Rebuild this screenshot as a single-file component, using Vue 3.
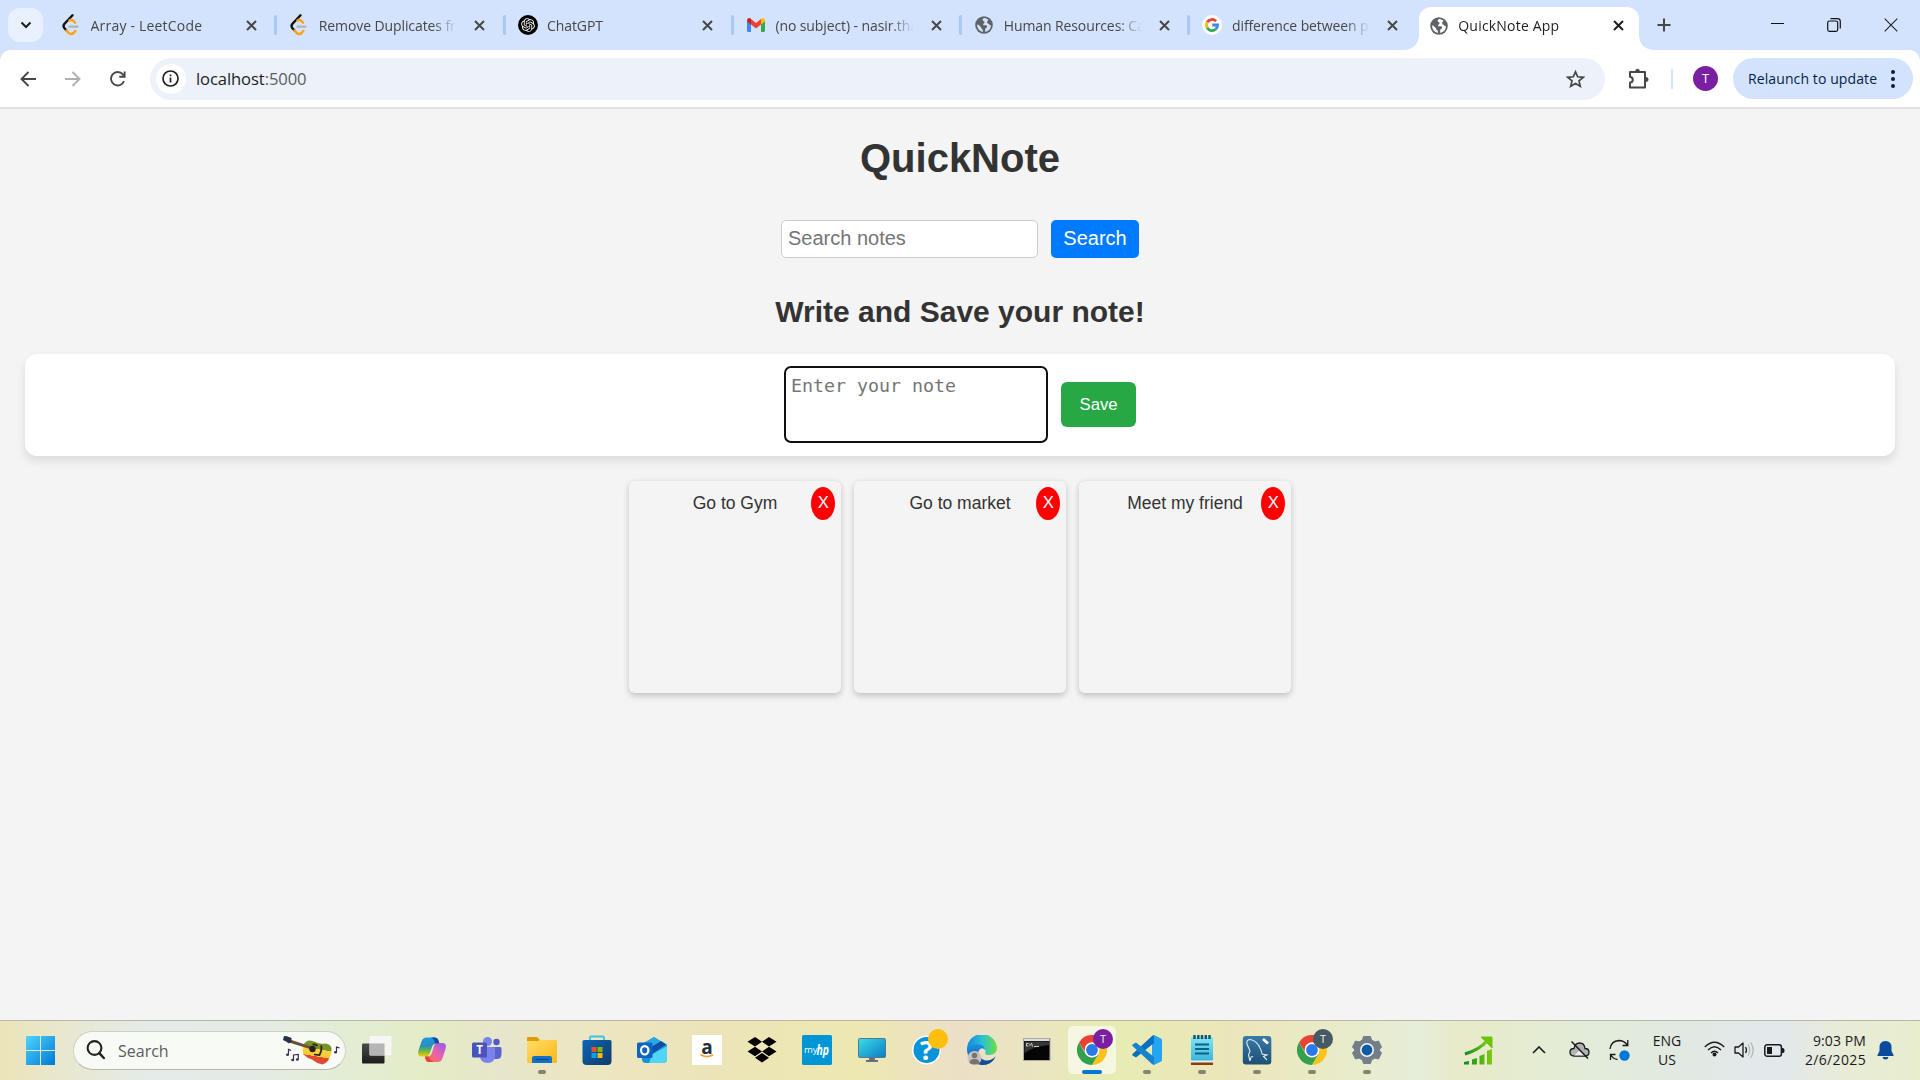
<script setup>
const tabs = [
  { icon: 'leetcode', title: 'Array - LeetCode', wide: true },
  { icon: 'leetcode', title: 'Remove Duplicates from' },
  { icon: 'chatgpt', title: 'ChatGPT' },
  { icon: 'gmail', title: '(no subject) - nasir.tha' },
  { icon: 'globe', title: 'Human Resources: Ca' },
  { icon: 'google', title: 'difference between pu' },
]
const notes = ['Go to Gym', 'Go to market', 'Meet my friend']
</script>

<template>
  <div class="screen">
    <svg class="defs" width="0" height="0" aria-hidden="true">
      <defs>
        <linearGradient id="winG" x1="0" y1="0" x2="1" y2="1"><stop offset="0" stop-color="#4fd4ff" /><stop offset="1" stop-color="#0078d4" /></linearGradient>
        <linearGradient id="tvG" x1="0" y1="0" x2="0" y2="1"><stop offset="0" stop-color="#4a4a4a" /><stop offset="1" stop-color="#1c1c1c" /></linearGradient>
        <linearGradient id="cpA" x1="0" y1="0" x2="0" y2="1"><stop offset="0" stop-color="#1b9bea" /><stop offset=".45" stop-color="#2c8fb8" /><stop offset=".7" stop-color="#66b84a" /><stop offset="1" stop-color="#ffc800" /></linearGradient>
        <linearGradient id="cpB" x1="1" y1="0" x2="0" y2="1"><stop offset="0" stop-color="#8d5cf0" /><stop offset=".45" stop-color="#e55fb5" /><stop offset="1" stop-color="#ff7a3c" /></linearGradient>
        <linearGradient id="foG" x1="0" y1="0" x2="1" y2="1"><stop offset="0" stop-color="#ffdc6b" /><stop offset="1" stop-color="#fdb813" /></linearGradient>
        <linearGradient id="stG" x1="0" y1="0" x2="1" y2="1"><stop offset="0" stop-color="#0b66b8" /><stop offset="1" stop-color="#123a66" /></linearGradient>
        <linearGradient id="moG" x1="0" y1="0" x2="1" y2="1"><stop offset="0" stop-color="#3bdcea" /><stop offset="1" stop-color="#0a7cc4" /></linearGradient>
        <linearGradient id="edA" x1="0" y1="0" x2="1" y2="0"><stop offset="0" stop-color="#1787d8" /><stop offset=".5" stop-color="#2bc0d8" /><stop offset="1" stop-color="#6be03e" /></linearGradient>
        <linearGradient id="edB" x1="0" y1="0" x2="0" y2="1"><stop offset="0" stop-color="#1b93e4" /><stop offset="1" stop-color="#0c4fa0" /></linearGradient>
        <linearGradient id="npG" x1="0" y1="0" x2="0" y2="1"><stop offset="0" stop-color="#83e3f6" /><stop offset="1" stop-color="#3ab8da" /></linearGradient>
        <linearGradient id="myG" x1="0" y1="0" x2="0" y2="1"><stop offset="0" stop-color="#3b7ba6" /><stop offset="1" stop-color="#1d4f72" /></linearGradient>
        <linearGradient id="grG" x1="0" y1="0" x2="1" y2="0"><stop offset="0" stop-color="#0d8a1c" /><stop offset="1" stop-color="#7ecb10" /></linearGradient>
        <linearGradient id="guG" x1=".3" y1="0" x2=".1" y2="1"><stop offset=".3" stop-color="#79912c" /><stop offset=".31" stop-color="#f7d33c" /><stop offset=".6" stop-color="#f7c934" /><stop offset=".61" stop-color="#df4a32" /></linearGradient>
        <symbol id="chrome" viewBox="0 0 30 30">
          <path d="M15 7.500H28A15 15 0 0 1 15 30L21.500 18.700Z" fill="#fcc31e" />
          <path d="M2 7.500A15 15 0 0 1 28 7.500H15A7.500 7.500 0 0 0 8.400 11.500L8 17Z" fill="#ea4335" />
          <path d="M2 7.500L8.500 18.800L15 22.500L21.500 18.700L15 30A15 15 0 0 1 2 7.500Z" fill="#34a04e" />
          <circle cx="15" cy="15" r="7.400" fill="#fff" /><circle cx="15" cy="15" r="5.900" fill="#2a78ea" />
        </symbol>
        <symbol id="globe" viewBox="0 0 18 18">
          <circle cx="9" cy="9" r="8.800" fill="#5f6368" />
          <path d="M9.200 2Q6.800 3.200 8 4.800Q10 5.300 9.500 6.800Q7.500 8 8.300 9.200H11Q12.800 9.800 12 11.500Q10.500 11.800 10.200 13V15.900Q15.500 14.800 16 9.200Q14.500 9.400 14 8Q11.800 7.600 12 5.800L13.500 3.800Q11.500 2 9.200 2ZM2 8.500Q2.200 14.500 7.800 16V13.500Q6 13.300 6.200 11.500L3.500 8.800Z" fill="var(--land)" />
        </symbol>
      </defs>
    </svg>

    <!-- tab strip -->
    <header class="strip">
      <button class="tabsearch"><svg width="12" height="8" viewBox="0 0 12 8"><path d="M1.500 1.500L6 6L10.500 1.500" fill="none" stroke="#1f1f1f" stroke-width="2" /></svg></button>
      <div v-for="(t, i) in tabs" :key="i" class="tab" :class="{ wide: t.wide, last: i === tabs.length - 1 }">
        <span class="fav">
          <svg v-if="t.icon === 'leetcode'" width="18" height="22" viewBox="0 0 18 22"><path d="M10.500 1.300L2.300 10Q.8 12 2.300 14L4.500 16.500" fill="none" stroke="#111" stroke-width="2.400" stroke-linecap="round" /><path d="M7.500 6.500Q9.500 4.800 11.500 7L13 8.700M4.500 16.500L7 19.300Q9.300 21 11.500 19L13.300 17" fill="none" stroke="#ffa116" stroke-width="2.400" stroke-linecap="round" /><path d="M7.500 12.700H15.500" stroke="#b3b3b3" stroke-width="2.300" stroke-linecap="round" /></svg>
          <svg v-else-if="t.icon === 'chatgpt'" class="gpt" width="20" height="20" viewBox="-5.500 -5.500 35 35"><circle cx="12" cy="12" r="17.500" fill="#000" /><path fill="#fff" d="M22.2819 9.8211a5.9847 5.9847 0 0 0-.5157-4.9108 6.0462 6.0462 0 0 0-6.5098-2.9A6.0651 6.0651 0 0 0 4.9807 4.1818a5.9847 5.9847 0 0 0-3.9977 2.9 6.0462 6.0462 0 0 0 .7427 7.0966 5.98 5.98 0 0 0 .511 4.9107 6.051 6.051 0 0 0 6.5146 2.9001A5.9847 5.9847 0 0 0 13.2599 24a6.0557 6.0557 0 0 0 5.7718-4.2058 5.9894 5.9894 0 0 0 3.9977-2.9001 6.0557 6.0557 0 0 0-.7475-7.0729zm-9.022 12.6081a4.4755 4.4755 0 0 1-2.8764-1.0408l.1419-.0804 4.7783-2.7582a.7948.7948 0 0 0 .3927-.6813v-6.7369l2.02 1.1686a.071.071 0 0 1 .038.052v5.5826a4.504 4.504 0 0 1-4.4945 4.4944zm-9.6607-4.1254a4.4708 4.4708 0 0 1-.5346-3.0137l.142.0852 4.783 2.7582a.7712.7712 0 0 0 .7806 0l5.8428-3.3685v2.3324a.0804.0804 0 0 1-.0332.0615L9.74 19.9502a4.4992 4.4992 0 0 1-6.1408-1.6464zM2.3408 7.8956a4.485 4.485 0 0 1 2.3655-1.9728V11.6a.7664.7664 0 0 0 .3879.6765l5.8144 3.3543-2.0201 1.1685a.0757.0757 0 0 1-.071 0l-4.8303-2.7865A4.504 4.504 0 0 1 2.3408 7.872zm16.5963 3.8558L13.1038 8.364 15.1192 7.2a.0757.0757 0 0 1 .071 0l4.8303 2.7913a4.4944 4.4944 0 0 1-.6765 8.1042v-5.6772a.79.79 0 0 0-.407-.667zm2.0107-3.0231l-.142-.0852-4.7735-2.7818a.7759.7759 0 0 0-.7854 0L9.409 9.2297V6.8974a.0662.0662 0 0 1 .0284-.0615l4.8303-2.7866a4.4992 4.4992 0 0 1 6.6802 4.66zM8.3065 12.863l-2.02-1.1638a.0804.0804 0 0 1-.038-.0567V6.0742a4.4992 4.4992 0 0 1 7.3757-3.4537l-.142.0805L8.704 5.459a.7948.7948 0 0 0-.3927.6813zm1.0976-2.3654l2.602-1.4998 2.6069 1.4998v2.9994l-2.5974 1.4997-2.6067-1.4997Z" /></svg>
          <svg v-else-if="t.icon === 'gmail'" width="18" height="14" viewBox="0 0 18 14"><path d="M0 2V12.500Q0 14 1.500 14H4V6Z" fill="#4285f4" /><path d="M18 2V12.500Q18 14 16.500 14H14V6Z" fill="#34a853" /><path d="M4 1L9 5L14 1V6.500L9 10.500L4 6.500Z" fill="#ea4335" /><path d="M0 2.500Q0 0 2.200 0Q3 0 4 1V6.500L0 3.500Z" fill="#c5221f" /><path d="M18 2.500Q18 0 15.800 0Q15 0 14 1V6.500L18 3.500Z" fill="#fbbc04" /></svg>
          <svg v-else-if="t.icon === 'globe'" width="18" height="18"><use href="#globe" /></svg>
          <svg v-else width="20" height="20" viewBox="0 0 20 20"><circle cx="10" cy="10" r="10" fill="#fff" /><g fill="none" stroke-width="2.800"><path d="M5.200 7.300A5.500 5.500 0 0 1 14 6.200" stroke="#ea4335" /><path d="M5.200 12.700A5.500 5.500 0 0 1 5.200 7.300" stroke="#fbbc05" /><path d="M5.200 12.700A5.500 5.500 0 0 0 13.700 14.200" stroke="#34a853" /><path d="M10.200 10H15.600Q15.500 12.700 13.700 14.200" stroke="#4285f4" /></g></svg>
        </span>
        <span class="title">{{ t.title }}</span>
        <svg class="x" width="11" height="11" viewBox="0 0 11 11"><path d="M1 1L10 10M10 1L1 10" stroke="#474747" stroke-width="2" /></svg>
      </div>
      <div class="tab wide active">
        <span class="fav"><svg width="18" height="18"><use href="#globe" /></svg></span>
        <span class="title">QuickNote App</span>
        <svg class="x" width="11" height="11" viewBox="0 0 11 11"><path d="M1 1L10 10M10 1L1 10" stroke="#1f1f1f" stroke-width="2" /></svg>
      </div>
      <svg class="plus" width="14" height="14" viewBox="0 0 14 14"><path d="M7 .5V13.500M.5 7H13.500" stroke="#474747" stroke-width="2" /></svg>
      <div class="winbtns">
        <svg width="14" height="14" viewBox="0 0 14 14"><path d="M1 5.500H14" stroke="#111" /></svg>
        <svg width="14" height="14" viewBox="0 0 14 14"><rect x=".7" y="3" width="10" height="10.300" rx="1.800" fill="none" stroke="#111" stroke-width="1.200" /><path d="M3.500 .7H10.500Q13.300 .7 13.300 3.500V10.500" fill="none" stroke="#111" stroke-width="1.200" /></svg>
        <svg width="14" height="14" viewBox="0 0 14 14"><path d="M.7 .7L13.300 13.300M13.300 .7L.7 13.300" stroke="#222" stroke-width="1.100" /></svg>
      </div>
    </header>

    <!-- toolbar -->
    <div class="toolwrap">
      <div class="toolbar">
        <div class="nav">
          <svg width="16" height="16" viewBox="0 0 16 16"><path d="M8.500 1L1.500 8L8.500 15M1.500 8H16" fill="none" stroke="#474747" stroke-width="1.900" /></svg>
          <svg width="16" height="16" viewBox="0 0 16 16"><path d="M7.500 1L14.500 8L7.500 15M14.500 8H0" fill="none" stroke="#b0b0b0" stroke-width="1.900" /></svg>
          <svg width="16" height="16" viewBox="0 0 16 16"><path d="M14 10.200A6.700 6.700 0 1 1 12.800 3.300L14 4.800" fill="none" stroke="#474747" stroke-width="1.900" /><path d="M14.600 .5V5.800H9.300" fill="none" stroke="#474747" stroke-width="1.900" /></svg>
        </div>
        <div class="omni">
          <span class="info"><svg width="17" height="17" viewBox="0 0 17 17"><circle cx="8.500" cy="8.500" r="7.500" fill="none" stroke="#1f1f1f" stroke-width="1.700" /><path d="M8.500 7.500V12.500M8.500 4.500V6.200" stroke="#1f1f1f" stroke-width="1.700" /></svg></span>
          <span class="url">localhost<i>:5000</i></span>
          <svg class="star" width="19" height="18" viewBox="0 0 19 18"><path d="M9.500 1.800L11.700 6.800L17.200 7.300L13 10.900L14.300 16.300L9.500 13.400L4.700 16.300L6 10.900L1.800 7.300L7.300 6.800Z" fill="none" stroke="#474747" stroke-width="1.700" /></svg>
        </div>
        <svg class="puzzle" width="21" height="21" viewBox="0 0 21 21"><path d="M2 4H17V19.500H2V14.800Q4.800 14.300 4.800 11.800T2 8.800Z" fill="none" stroke="#474747" stroke-width="2" stroke-linejoin="round" /><path d="M7 3.500Q7.300 .8 9.500 .8T12 3.500ZM17.500 9V14.200Q20.500 13.800 20.500 11.600T17.500 9Z" fill="#474747" /></svg>
        <span class="vsep"></span>
        <span class="avatar">T</span>
        <div class="relaunch"><span>Relaunch to update</span><b class="dots"><i></i><i></i><i></i></b></div>
      </div>
    </div>

    <!-- page -->
    <main class="page">
      <h1>QuickNote</h1>
      <form class="search" @submit.prevent>
        <input type="text" placeholder="Search notes" />
        <button>Search</button>
      </form>
      <h2>Write and Save your note!</h2>
      <form class="compose" @submit.prevent>
        <textarea placeholder="Enter your note"></textarea>
        <button>Save</button>
      </form>
      <section class="notes">
        <article v-for="n in notes" :key="n" class="note">
          <p>{{ n }}</p>
          <button class="del">X</button>
        </article>
      </section>
    </main>

    <!-- taskbar -->
    <footer class="taskbar">
      <svg class="start" width="29" height="29" viewBox="0 0 29 29"><path d="M0 0H14V14H0ZM15 0H29V14H15ZM0 15H14V29H0ZM15 15H29V29H15Z" fill="url(#winG)" /></svg>
      <div class="tsearch">
        <svg width="20" height="20" viewBox="0 0 20 20"><circle cx="8.500" cy="8" r="6.900" fill="none" stroke="#222" stroke-width="2.100" /><path d="M13.300 13.200L17.800 18" stroke="#222" stroke-width="2.500" stroke-linecap="round" /></svg>
        <span>Search</span>
        <svg class="guitar" width="58" height="30" viewBox="0 0 58 30">
          <path d="M21 9Q24 3.500 31 6.500Q37 9.500 42 8.500Q50 9 48.500 17Q46 28 39.500 29.500Q33 28 29 24.500Q24 23 20.500 19.500Q18.500 14 21 9Z" fill="url(#guG)" />
          <path d="M7 4.500L31 12.500L30 15L6 7.500Z" fill="#68503c" /><path d="M1 1L4 1.200L8.500 3L8.500 6.500L6 8.500L3 6.500L0 5Z" fill="#263345" />
          <circle cx="29.500" cy="14" r="3.200" fill="#2c1c20" /><path d="M29.500 9.500Q33 9 34.500 11M38 10.500Q39.500 14 36.500 20L31 19.500" fill="none" stroke="#2a2022" stroke-width="1.700" />
          <path d="M5.500 19.500V14.500L8 15.500M10.500 24.500V20L15.300 19.500V24M53.500 17V12L56.500 12.800" fill="none" stroke="#3d2e57" stroke-width="1.200" /><ellipse cx="4.500" cy="19.700" rx="1.500" ry="1.200" fill="#3d2e57" /><ellipse cx="9.700" cy="25" rx="1.500" ry="1.200" fill="#3d2e57" /><ellipse cx="14.300" cy="24.500" rx="1.500" ry="1.200" fill="#3d2e57" /><ellipse cx="52.500" cy="17.300" rx="1.500" ry="1.200" fill="#3d2e57" />
        </svg>
      </div>
      <div class="apps">
        <div class="app"><svg viewBox="0 0 30 30"><rect y="8.500" width="22.500" height="20" rx="1" fill="url(#tvG)" /><rect x="7.500" y="1" width="22" height="19.500" rx="1" fill="#f7f7f7" opacity=".92" /><path d="M7.500 8.500H22.500V20.500H8.500Q7.500 20.500 7.500 19.500Z" fill="#b5b5b5" /></svg></div>
        <div class="app"><svg viewBox="0 0 30 30"><path d="M9.500 2.500H18Q20.500 2.500 21.300 5L22.500 9H18.500Q15.800 9 15 12L12.800 18.500Q11.800 21.500 8.500 21.500H5Q0 21.500 1.300 16L4.300 7Q5.500 2.500 9.500 2.500Z" fill="url(#cpA)" /><path d="M20.500 27H12Q9.500 27 8.700 24.500L7.800 21.500H10.500Q14 21.500 15 17.500L17 11Q18 8 21.500 8H25Q30 8 28.700 13.500L25.700 22.500Q24.500 27 20.500 27Z" fill="url(#cpB)" /><path d="M14 2.500H18Q20.500 2.500 21.300 5L22.300 8.200H18Q17.200 4 14 2.500Z" fill="#174aa5" /><path d="M16.500 27H12Q9.500 27 8.700 24.500L7.900 21.500H11.500Q13 25.500 16.500 27Z" fill="#e8432e" /></svg></div>
        <div class="app"><svg viewBox="0 0 30 30"><circle cx="24.500" cy="7" r="3.200" fill="#5059c9" /><path d="M19 12H28Q29.500 12 29.500 13.500V19Q29.500 24 25 24H21Z" fill="#5b62cf" /><circle cx="15.500" cy="6.500" r="4.500" fill="#7b83eb" /><path d="M8 12H22Q23 12 23 13.500V20Q23 28 15.500 28T8 20Z" fill="#7b83eb" /><rect y="7.500" width="15" height="15" rx="1.500" fill="#4b53bc" /><text x="7.500" y="19" text-anchor="middle" font-size="11.500" font-weight="700" fill="#fff">T</text></svg></div>
        <div class="app"><svg viewBox="0 0 30 30"><path d="M0 3Q0 2 1 2H10L13 5V10H0Z" fill="#e09b05" /><path d="M0 6H11L13 5H29Q30 5 30 6V27Q30 28 29 28H1Q0 28 0 27Z" fill="url(#foG)" /><path d="M5 28V23Q5 21 7 21H23Q25 21 25 23V28Z" fill="#1272c4" /><path d="M8.500 24.500H21.500" stroke="#07448a" stroke-width="1.300" /></svg><i class="run"></i></div>
        <div class="app"><svg viewBox="0 0 30 30"><path d="M8 6V2.500Q8 1.500 9 1.500H21Q22 1.500 22 2.500V6" fill="none" stroke="#35c5f0" stroke-width="1.800" /><path d="M.5 6.500Q.5 5 2 5H28Q29.500 5 29.500 6.500V26Q29.500 30 25.500 30H4.500Q.5 30 .5 26Z" fill="url(#stG)" /><path d="M9.500 12H14.500V17H9.500Z" fill="#f25022" /><path d="M15.500 12H20.500V17H15.500Z" fill="#7fba00" /><path d="M9.500 18H14.500V23H9.500Z" fill="#00a4ef" /><path d="M15.500 18H20.500V23H15.500Z" fill="#ffb900" /></svg></div>
        <div class="app"><svg viewBox="0 0 30 30"><path d="M5 9L17 2L30 10V24Q30 28 26 28H9Q5 28 5 24Z" fill="#1490df" /><path d="M17 2L30 10L14 20L8 8Z" fill="#28a8ea" /><path d="M24 6L29.500 9.500L15 19L12 13.500Z" fill="#0f4fa8" /><path d="M30 11V24Q30 28 26 28H12L15 19.500Z" fill="#50d5f6" /><rect y="7.500" width="15.500" height="15.500" rx="1.500" fill="#0f65bd" /><ellipse cx="7.700" cy="15.300" rx="3.700" ry="4.200" fill="none" stroke="#fff" stroke-width="2.200" /></svg></div>
        <div class="app"><svg viewBox="0 0 30 30"><rect width="30" height="30" fill="#fff" /><text x="15" y="19" text-anchor="middle" font-size="19" font-weight="700" fill="#232f3e">a</text><path d="M8.500 19.500Q15 23.500 21 19.800" fill="none" stroke="#f5a13c" stroke-width="1.600" /></svg></div>
        <div class="app"><svg viewBox="0 0 30 30"><path d="M8 2L15 6.700L8 11.400L.5 6.700ZM22 2L29.500 6.700L22 11.400L15 6.700ZM8 11.800L15 16.500L8 21.200L.5 16.500ZM22 11.800L29.500 16.500L22 21.200L15 16.500ZM15 18L22 22.700L15 27.400L8 22.700Z" fill="#000" /></svg></div>
        <div class="app"><svg viewBox="0 0 30 30"><rect width="30" height="30" rx="1.500" fill="#0096d6" /><text x="2" y="18" font-size="9.500" fill="#fff">my</text><text x="14.500" y="19.500" font-size="13.500" font-weight="700" font-style="italic" fill="#fff" textLength="12.500" lengthAdjust="spacingAndGlyphs">hp</text></svg></div>
        <div class="app"><svg viewBox="0 0 30 30"><path d="M12 22H18V25H21V27H9V25H12Z" fill="#65717b" /><rect x="1.500" y="3.500" width="27" height="19" rx="1" fill="url(#moG)" stroke="#557a8d" /></svg></div>
        <div class="app"><svg viewBox="0 0 30 30"><circle cx="14.500" cy="15" r="14.500" fill="#fff" /><circle cx="14.500" cy="15" r="13" fill="#0a93d8" /><text x="14.500" y="24.500" text-anchor="middle" font-size="27" font-weight="700" fill="#fff">?</text></svg><i class="badge yellow"></i></div>
        <div class="app"><svg viewBox="0 0 30 30"><path d="M0 15A15 15 0 0 1 30 13Q30 20 22 20Q17 20 18.500 17Q19 12 13 11Q6 10 0 15Z" fill="url(#edA)" /><path d="M0 15Q2 9 10 9Q17 9 18.500 15Q14 11 11.500 16Q10 22 17 25Q24 27 28.500 22Q24 30 15 30Q1 29 0 15Z" fill="url(#edB)" /><path d="M11.500 16Q8 21 14 25Q22 28 28.500 21.500Q25 30 15 30Q8 27 9 20Z" fill="#144f94" /><circle cx="7.500" cy="23" r="7" fill="#c9c5be" /><circle cx="7.500" cy="20.500" r="2.800" fill="#77736d" /><path d="M2.500 28Q2.500 24 7.500 24T12.500 28Q7.500 31 2.500 28Z" fill="#77736d" /></svg></div>
        <div class="app"><svg viewBox="0 0 30 30"><rect x="1.500" y="3.500" width="26.500" height="22" fill="#050505" stroke="#a9a9a9" /><path d="M2 4H27.500V6H2Z" fill="#ddd" /><path d="M2.500 6.500H27V10Q12 11 2.500 18Z" fill="#373737" /><path d="M6.500 8.500H4.500V11H6.500M8 8.500V11M9.500 8L10.500 11.500M12 11.500H17" fill="none" stroke="#ddd" stroke-width=".9" /></svg></div>
        <div class="app on"><svg><use href="#chrome" /></svg><i class="badge purple">T</i><i class="run big"></i></div>
        <div class="app"><svg viewBox="0 0 30 30"><path d="M22 0L29 3.500Q30 4 30 5V25Q30 26 29 26.500L22 30L20 27V3Z" fill="#26a4f2" /><path d="M22 0V8L4 22.500L.5 20.500Q0 19.500 .5 19L20 1Z" fill="#0a6fbd" /><path d="M22 30V22L4 7.500L.5 9.500Q0 10.500 .5 11L20 29Z" fill="#1484d1" /></svg><i class="run"></i></div>
        <div class="app"><svg viewBox="0 0 30 30"><rect x="4" y="26" width="22" height="4" fill="#8d3b10" /><rect x="4" y="24" width="22" height="3.500" fill="#eee" /><rect x="4" y="2" width="22" height="23.500" rx="1" fill="url(#npG)" /><path d="M8 9.500H22M8 14H22M8 18.500H22" stroke="#086384" stroke-width="2" /><path d="M7.500 0V4M11.300 0V4M15 0V4M18.800 0V4M22.500 0V4" stroke="#14536b" stroke-width="2.400" /></svg><i class="run"></i></div>
        <div class="app"><svg viewBox="0 0 30 30"><rect x=".8" y="1" width="28.500" height="28.500" rx="3" fill="url(#myG)" /><path d="M8 26L6.500 20L8 16L5 9Q4 4.500 8.500 4.500Q15 6 18 13Q20 17 20 19L25 20L21.500 21.500L25 25M8 26Q9 20 11 22" fill="none" stroke="#dfeaf2" stroke-width="1.100" /><path d="M21 4L26 8.500" stroke="#fff" stroke-width="2.800" /></svg><i class="run"></i></div>
        <div class="app"><svg><use href="#chrome" /></svg><i class="badge slate">T</i><i class="run"></i></div>
        <div class="app"><svg viewBox="0 0 30 30"><path d="M11.500 1.500H18.500L19.500 5L23 7L26.500 6L29.500 12L27 15L29.500 18L26.500 24L23 23L19.500 25L18.500 28.500H11.500L10.500 25L7 23L3.500 24L.5 18L3 15L.5 12L3.500 6L7 7L10.500 5Z" fill="#747e88" stroke="#747e88" stroke-linejoin="round" /><circle cx="15" cy="15" r="7" fill="#f4f4f4" /><circle cx="15" cy="15" r="5.400" fill="#0d5aa7" /></svg><i class="run"></i></div>
      </div>
      <div class="tray">
        <svg class="graph" width="29" height="29" viewBox="0 0 29 29"><path d="M1 18Q15 14 23 5" fill="none" stroke="url(#grG)" stroke-width="3.200" /><path d="M17 1H28V12Z" fill="#6cc40d" stroke="#6cc40d" /><path d="M0 26L5 25V28.500H0ZM8 23.500L13 22V28.500H8ZM15.500 20L20.500 18V28.500H15.500ZM23 15L28 13V28.500H23Z" fill="url(#grG)" /></svg>
        <svg class="chev" width="14" height="8" viewBox="0 0 14 8"><path d="M1 7L7 1L13 7" fill="none" stroke="#1a1a1a" stroke-width="1.600" /></svg>
        <svg class="cloud" width="21" height="18" viewBox="0 0 21 18"><path d="M5 15Q1 15 1 11.200Q1 7.500 5 7.500Q6 2 10.500 2Q15.500 2 16 7.500Q20 7.500 20 11.200Q20 15 16 15Z" fill="#b2b2b5" stroke="#1a1a1a" stroke-width="1.300" /><path d="M5 14.500L11 9L16 14.500Z" fill="#ececf0" /><path d="M2.500 .5L19 17.500" stroke="#1a1a1a" stroke-width="1.500" /></svg>
        <svg class="sync" width="21" height="22" viewBox="0 0 21 22"><path d="M1 10Q2 2 10 1.500Q15 1.500 18.500 6M18.800 1V6.500H13.500M1.500 21V15.500H6.500M1.500 15.500Q4 20 8.500 20.500" fill="none" stroke="#1a1a1a" stroke-width="1.300" /><circle cx="15.500" cy="16.500" r="5.200" fill="#0078d7" /></svg>
        <div class="lang">ENG<br />US</div>
        <svg class="wifi" width="21" height="16" viewBox="0 0 21 16"><path d="M.8 6Q10.500 -3.500 20.200 6M4 9Q10.500 2.500 17 9M7 12Q10.500 8.500 14 12" fill="none" stroke="#1a1a1a" stroke-width="1.400" /><circle cx="10.500" cy="13.600" r="2" fill="#1a1a1a" /></svg>
        <svg class="vol" width="21" height="18" viewBox="0 0 21 18"><path d="M1 6H4.500L9 2V16L4.500 12H1Z" fill="none" stroke="#1a1a1a" stroke-width="1.300" stroke-linejoin="round" /><path d="M11.500 6Q13.500 9 11.500 12" fill="none" stroke="#1a1a1a" stroke-width="1.300" /><path d="M14 3.500Q17.500 9 14 14.500M16.800 1.500Q21.500 9 16.800 16.500" fill="none" stroke="#b3b7b5" stroke-width="1.300" /></svg>
        <svg class="batt" width="21" height="13" viewBox="0 0 21 13"><rect x=".8" y=".8" width="16.600" height="11.400" rx="2.300" fill="none" stroke="#1a1a1a" stroke-width="1.500" /><rect x="3" y="3" width="5" height="7" fill="#1a1a1a" /><path d="M18 4H19Q20.500 4 20.500 6.500T19 9H18Z" fill="#1a1a1a" /></svg>
        <div class="clock">9:03 PM<br /><span>2/6/2025</span></div>
        <svg class="bell" width="17" height="20" viewBox="0 0 17 20"><path d="M2.500 7.500Q2.500 1 8.500 1T14.500 7.500V11L16.500 15V16H.5V15L2.500 11ZM5.500 17H11.500Q11 19.500 8.500 19.500T5.500 17Z" fill="#0a4a9c" /></svg>
      </div>
    </footer>
  </div>
</template>

<style>
html, body { margin: 0; overflow: hidden; }
</style>

<style scoped>
* { box-sizing: border-box; }
.screen { width: 1920px; height: 1080px; display: flex; flex-direction: column; background: #f4f4f4; font-family: "Open Sans", "Noto Sans", sans-serif; overflow: hidden; }
.defs { position: absolute; }
button { border: 0; padding: 0; }
svg { display: block; flex: none; }
i { font-style: normal; }

.strip { height: 50px; flex: none; display: flex; background: #d3e3fd; padding-left: 8px; }
.tabsearch { width: 35px; height: 34px; margin: 8px 4px 0 0; border-radius: 12px; background: #e9f0fe; display: flex; align-items: center; justify-content: center; }
.tab { --land: #d3e3fd; position: relative; width: 228.300px; height: 50px; padding: 0 18.500px 0 15px; display: flex; align-items: center; flex: none; }
.tab:not(.active):not(.last)::after { content: ""; position: absolute; right: -2px; top: 15px; width: 3px; height: 20px; border-radius: 2px; background: #a8c7fa; }
.fav { width: 18px; margin-right: 10.500px; display: flex; justify-content: center; }
.title { flex: 1; min-width: 0; margin-right: 17px; white-space: nowrap; overflow: hidden; font-size: 14px; line-height: 22px; letter-spacing: -.1px; color: #474747; padding-top: 1px; -webkit-mask-image: linear-gradient(90deg, #000 calc(100% - 25px), transparent); mask-image: linear-gradient(90deg, #000 calc(100% - 25px), transparent); }
.wide .title { letter-spacing: .2px; }
.active { --land: #fff; width: 220px; height: 43px; margin: 7px 0 0 2px; padding: 0 15px 6px 11px; background: #fff; border-radius: 12px 12px 0 0; }
.active .title { color: #1f1f1f; }
.active::before, .active::after { content: ""; position: absolute; bottom: 0; width: 14px; height: 14px; }
.active::before { left: -14px; background: radial-gradient(circle at 0 0, transparent 13.500px, #fff 14px); }
.active::after { right: -14px; background: radial-gradient(circle at 100% 0, transparent 13.500px, #fff 14px); }
.plus { margin: 18px 0 0 18px; }
.winbtns { margin: 18px 22px 0 auto; display: flex; gap: 43px; }

.toolwrap { height: 59px; flex: none; background: #d3e3fd; }
.toolbar { height: 59px; background: #fff; border-radius: 11px 11px 0 0; border-bottom: 2px solid #e1e1e1; display: flex; align-items: center; padding: 0 7px 0 20px; }
.nav { display: flex; gap: 29px; width: 130px; margin-left: -.5px; }
.omni { width: 1455px; height: 42px; border-radius: 21px; background: #edf1fa; display: flex; align-items: center; padding: 0 20px 0 6px; }
.info { width: 30px; height: 30px; border-radius: 50%; background: #fff; display: flex; align-items: center; justify-content: center; margin-right: 10.500px; }
.url { font-size: 16.600px; line-height: 24px; letter-spacing: -.1px; color: #1f1f1f; padding-top: 1px; }
.url i { color: #5a5e62; }
.star { margin-left: auto; }
.puzzle { margin: -1px 0 0 23px; }
.vsep { width: 2px; height: 20px; background: #d3e3fd; margin-left: 22px; }
.avatar { width: 25px; height: 25px; border-radius: 50%; background: #7b1fa2; color: #fff; font-size: 13px; line-height: 25px; text-align: center; margin-left: 20.500px; }
.relaunch { width: 180px; height: 41px; margin-left: auto; border-radius: 21px; background: #d3e3fd; color: #041e49; font-size: 14px; letter-spacing: .1px; display: flex; align-items: center; justify-content: space-between; padding: 0 18.500px 0 15px; white-space: nowrap; }
.dots { display: flex; flex-direction: column; gap: 3px; }
.dots i { width: 4px; height: 4px; border-radius: 50%; background: #041e49; }

.page { flex: 1; min-height: 0; padding: 26px 25px 0; display: flex; flex-direction: column; align-items: center; font-family: "Liberation Sans", Arial, sans-serif; color: #333; }
h1 { margin: 0 0 39px; font-size: 40px; line-height: 46px; }
.search { display: flex; gap: 13px; height: 38px; }
.search input { width: 257px; height: 38px; border: 1px solid #ccc; border-radius: 5px; padding: 0 6px 2px; font: 20px/24px "Liberation Sans", Arial, sans-serif; outline: 0; background: #fff; }
input::placeholder, textarea::placeholder { color: #757575; opacity: 1; }
.search button { width: 88px; height: 38px; border-radius: 5px; background: #007bff; color: #fff; font: 20px/36px "Liberation Sans", Arial, sans-serif; padding-bottom: 2px; }
h2 { margin: 37px 0 25px; font-size: 30px; line-height: 34px; }
.compose { width: 1870px; height: 102px; border-radius: 12px; background: #fff; box-shadow: 0 5px 10px rgba(0, 0, 0, .1); display: flex; justify-content: center; align-items: center; gap: 13px; padding-bottom: 1px; }
textarea { width: 264px; height: 77px; border: 2px solid #101010; border-radius: 7px; resize: none; outline: 0; padding: 6px 5px; font: 18.270px/23px "DejaVu Sans Mono", monospace; background: #fff; }
.compose button { width: 75px; height: 45px; border-radius: 6px; background: #28a745; color: #fff; font: 16.670px/45px "Liberation Sans", Arial, sans-serif; }
.notes { margin-top: 25px; display: flex; gap: 12.500px; }
.note { position: relative; width: 212.500px; height: 212px; border-radius: 6px; box-shadow: 0 2.500px 6px rgba(0, 0, 0, .2); background: #f4f4f4; }
.note p { margin: 12px 0 0; text-align: center; font-size: 17.500px; line-height: 21px; }
.del { position: absolute; top: 6px; right: 6px; width: 24px; height: 33px; border-radius: 50%; background: #f00; color: #fff; font: 16.670px/31px "Liberation Sans", Arial, sans-serif; padding-bottom: 2px; }

.taskbar { height: 60px; flex: none; border-top: 1px solid #b9b6a4; display: flex; align-items: center; padding: 0 0 1px 26px; background: linear-gradient(90deg, #ebe4b8 0, #e9e7cb 50px, #e4ebe9 150px, #e4ebe6 250px, #e3edd5 340px, #e4ecc6 430px, #e7e6cb 500px, #ece6c2 590px, #ece4b9 700px, #ede8b2 860px, #ecdfc8 960px, #eae6c0 1040px, #e7ecb3 1110px, #ebe6ba 1230px, #e9ebc8 1330px, #e6edd9 1420px, #e8ebc9 1460px, #e3ecd9 1580px, #e2e9e2 1680px, #e3e8ec 1780px, #e8ecd6 1850px, #e9edce 1920px); }
.tsearch { width: 273px; height: 39px; margin: 0 3.500px 0 18px; border-radius: 20px; background: #f8faf5; border: 1px solid #cfd1c5; border-bottom-color: #b6b8ac; display: flex; align-items: center; padding: 0 4px 0 12px; font-size: 16px; color: #5c5c5c; }
.tsearch span { margin-left: 12px; line-height: 24px; padding-top: 1px; }
.guitar { margin-left: auto; }
.apps { display: flex; height: 58px; align-items: center; }
.app { position: relative; width: 55px; height: 48px; display: flex; justify-content: center; align-items: center; }
.app > svg { width: 30px; height: 30px; }
.app text { font-family: "Open Sans", sans-serif; }
.app.on { width: 48px; margin: 0 3.500px; border-radius: 5px; background: rgba(255, 255, 255, .6); }
.run { position: absolute; bottom: 0; left: 50%; width: 8px; height: 4px; margin-left: -4px; border-radius: 2px; background: #85846f; }
.run.big { width: 20px; margin-left: -10px; background: #0078d4; }
.badge { position: absolute; top: 3px; left: 50%; margin-left: 1px; width: 20px; height: 20px; border-radius: 50%; color: #eee; font-size: 11px; line-height: 20px; text-align: center; }
.yellow { background: #ffbe0b; }
.purple { background: #7b1fa2; }
.slate { background: #455a64; }
.tray { display: flex; align-items: center; height: 58px; margin-left: 69.500px; color: #1a1a1a; font-size: 14px; line-height: 19.500px; }
.chev { margin-left: 39px; }
.cloud { margin-left: 23px; }
.sync { margin-left: 19px; }
.lang { width: 40px; margin-left: 17px; text-align: center; }
.wifi { margin: -2px 0 0 17px; }
.vol { margin-left: 9px; }
.batt { margin-left: 9px; }
.clock { width: 72px; margin-left: 9px; text-align: right; white-space: nowrap; letter-spacing: .1px; }
.clock span { letter-spacing: .35px; }
.bell { margin-left: 11px; }
</style>
